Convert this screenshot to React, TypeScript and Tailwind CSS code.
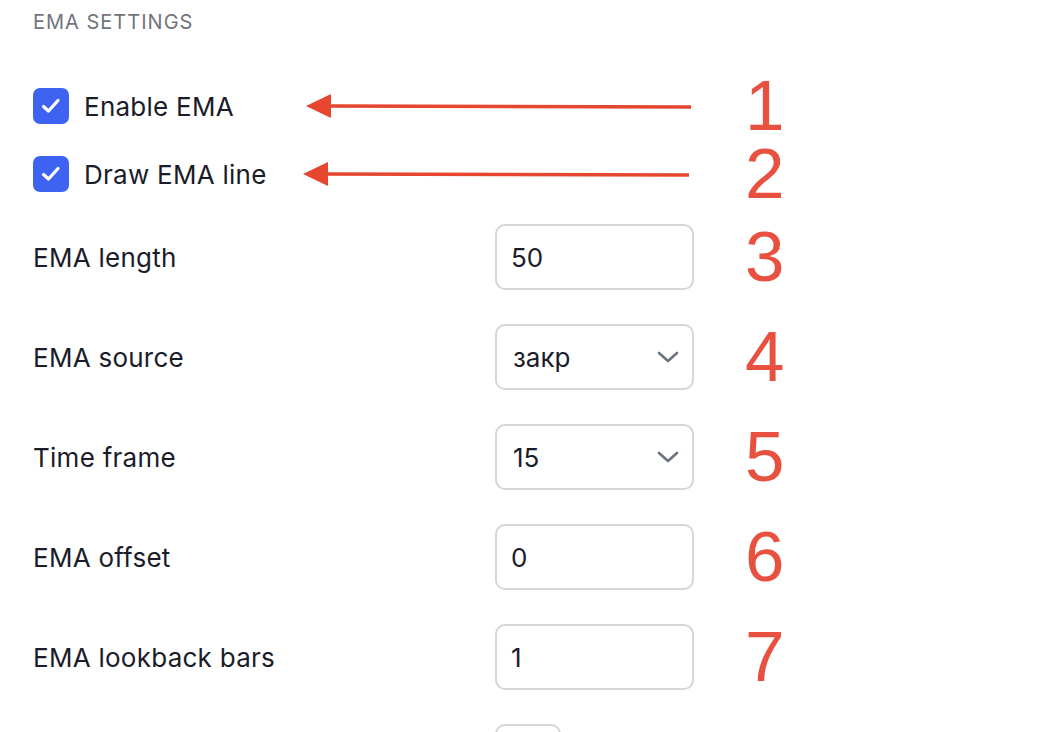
import { useState } from "react";

type Field =
  | { kind: "input"; label: string; value: string; note: string }
  | { kind: "select"; label: string; value: string; options: string[]; note: string };

const FIELDS: Field[] = [
  { kind: "input", label: "EMA length", value: "50", note: "3" },
  { kind: "select", label: "EMA source", value: "закр", options: ["откр", "макс", "мин", "закр"], note: "4" },
  { kind: "select", label: "Time frame", value: "15", options: ["1", "5", "15", "60"], note: "5" },
  { kind: "input", label: "EMA offset", value: "0", note: "6" },
  { kind: "input", label: "EMA lookback bars", value: "1", note: "7" },
];

const Note = ({ children }: { children: string }) => (
  <div className="font-['Liberation_Sans',Arial,sans-serif] text-[71px] leading-[52px] text-[#e8503f]">{children}</div>
);

const Arrow = ({ width }: { width: number }) => (
  <svg width={width} height="26" viewBox={`0 0 ${width} 26`} className="block">
    <line x1="22" y1="13" x2={width} y2="14" stroke="#e6452e" strokeWidth="3.5" />
    <polygon points="0,13 25,1 25,25" fill="#e6452e" />
  </svg>
);

const CheckRow = ({ label, note, arrowLeft, arrowWidth }: { label: string; note: string; arrowLeft: number; arrowWidth: number }) => {
  const [checked, setChecked] = useState(true);

  return (
    <div className="relative flex h-[36px] items-center">
      <label className="flex w-[712px] cursor-pointer items-center gap-[15px]">
        <button
          type="button"
          onClick={() => setChecked(!checked)}
          className={`flex h-[36px] w-[36px] items-center justify-center rounded-[7px] ${checked ? "bg-[#3e63f3]" : "border-2 border-gray-300 bg-white"}`}
        >
          {checked && (
            <svg width="22" height="22" viewBox="0 0 22 22" fill="none">
              <path d="M3.5 11.5 L8.5 16 L18 5.5" stroke="white" strokeWidth="3.2" strokeLinecap="round" strokeLinejoin="round" />
            </svg>
          )}
        </button>
        <span className="text-[26px] tracking-[0.01em] text-[#1a1d29]">{label}</span>
      </label>
      <Note>{note}</Note>
      <div className="absolute top-1/2 -translate-y-1/2" style={{ left: arrowLeft }}>
        <Arrow width={arrowWidth} />
      </div>
    </div>
  );
};

const Chevron = () => (
  <svg width="22" height="14" viewBox="0 0 22 14" fill="none">
    <path d="M2 3 L11 11 L20 3" stroke="#6b7280" strokeWidth="2.6" strokeLinecap="round" strokeLinejoin="round" />
  </svg>
);

const FieldRow = ({ field }: { field: Field }) => {
  const [value, setValue] = useState(field.value);

  return (
    <div className="flex h-[66px] items-center">
      <div className="w-[462px] text-[26px] tracking-[0.01em] text-[#1a1d29]">{field.label}</div>
      {field.kind === "input" ? (
        <input
          value={value}
          onChange={(e) => setValue(e.target.value)}
          className="h-[66px] w-[199px] rounded-[10px] border-2 border-[#d4d6dc] bg-white px-[14px] text-[26px] text-[#1a1d29] outline-none"
        />
      ) : (
        <div className="relative h-[66px] w-[199px]">
          <select
            value={value}
            onChange={(e) => setValue(e.target.value)}
            className="h-full w-full appearance-none rounded-[10px] border-2 border-[#d4d6dc] bg-white px-[16px] text-[26px] text-[#1a1d29] outline-none"
          >
            {field.options.map((o) => (
              <option key={o}>{o}</option>
            ))}
          </select>
          <div className="pointer-events-none absolute right-[15px] top-1/2 -translate-y-1/2">
            <Chevron />
          </div>
        </div>
      )}
      <div className="ml-[51px]">
        <Note>{field.note}</Note>
      </div>
    </div>
  );
}

export default function App() {
  return (
    <div className="h-[732px] w-[1048px] overflow-hidden bg-white pl-[33px] font-['Inter','Noto_Sans',sans-serif]">
      <div className="flex h-[44px] items-center text-[20px] uppercase tracking-[0.05em] text-[#70747e]">EMA Settings</div>

      <div className="mt-[44px] flex flex-col gap-[32px]">
        <CheckRow label="Enable EMA" note="1" arrowLeft={273} arrowWidth={385} />
        <CheckRow label="Draw EMA line" note="2" arrowLeft={270} arrowWidth={386} />
      </div>

      <div className="mt-[32px] flex flex-col gap-[34px]">
        {FIELDS.map((f) => (
          <FieldRow key={f.label} field={f} />
        ))}
        <div className="h-[66px] w-[66px] translate-x-[462px] rounded-[10px] border-2 border-[#d4d6dc]" />
      </div>
    </div>
  );
}
